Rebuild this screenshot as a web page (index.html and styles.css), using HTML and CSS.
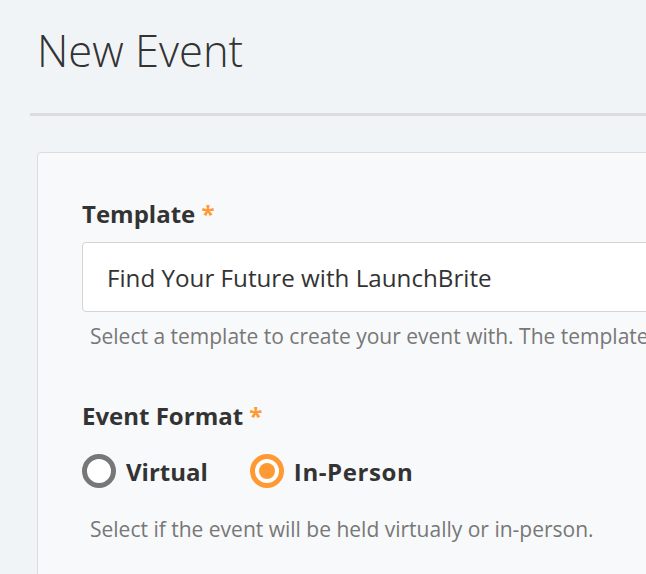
FILE: index.html
```html
<!DOCTYPE html>
<html>
<head>
<meta charset="utf-8">
<link rel="stylesheet" href="styles.css">
</head>
<body>
<div class="page">
  <h1 class="title">New Event</h1>
  <hr class="divider">
  <div class="card">
    <div class="field">
      <label class="label">Template <span class="req">*</span></label>
      <div class="input">Find Your Future with LaunchBrite</div>
      <p class="help">Select a template to create your event with. The template</p>
    </div>
    <div class="field">
      <label class="label">Event Format <span class="req">*</span></label>
      <div class="radios">
        <span class="radio"><span class="dot"></span>Virtual</span>
        <span class="radio checked"><span class="dot"></span>In-Person</span>
      </div>
      <p class="help help-last">Select if the event will be held virtually or in-person.</p>
    </div>
  </div>
</div>
</body>
</html>
```
FILE: styles.css
```css
html, body {
  margin: 0;
  padding: 0;
  background: #f1f4f7;
  font-family: "Open Sans", "Noto Sans", sans-serif;
  color: #333;
  overflow: hidden;
}
.page {
  padding: 21px 0 0 30px;
  width: 800px;
}
.title {
  margin: 0 0 0 7px;
  font-size: 43.5px;
  font-weight: 300;
  line-height: 60px;
  color: #333;
}
.divider {
  margin: 32px 0 0 0;
  border: 0;
  height: 3px;
  background: #dadcde;
}
.card {
  margin: 36px 0 0 7px;
  background: #f8f9fa;
  border: 1px solid #dcdcdc;
  border-radius: 4px;
  padding: 45px 0 40px 44px;
}
.field {
  margin-bottom: 50px;
}
.label {
  display: block;
  font-size: 24px;
  font-weight: 700;
  line-height: 32px;
  color: #333;
}
.req { color: #ff9933; }
.input {
  margin-top: 12px;
  height: 70px;
  box-sizing: border-box;
  background: #fff;
  border: 1px solid #d4d4d4;
  border-radius: 4px;
  padding: 0 24px;
  display: flex;
  align-items: center;
  font-size: 24.2px;
  color: #333;
}
.help {
  margin: 10px 0 0 8px;
  font-size: 21px;
  line-height: 28px;
  color: #777;
  white-space: nowrap;
}
.help-last {
  margin-top: 27px;
}
.radios {
  display: flex;
  gap: 42px;
  margin-top: 22px;
}
.radio {
  display: flex;
  align-items: center;
  gap: 10px;
  font-size: 24px;
  font-weight: 700;
}
.checked {
  letter-spacing: 0.6px;
}
.dot {
  width: 34px;
  height: 34px;
  box-sizing: border-box;
  border: 5px solid #777;
  border-radius: 50%;
  background: #fff;
  position: relative;
}
.checked .dot {
  border-color: #ff9933;
}
.checked .dot::after {
  content: "";
  position: absolute;
  left: 4px; top: 4px;
  width: 16px; height: 16px;
  border-radius: 50%;
  background: #ff9933;
}
```
